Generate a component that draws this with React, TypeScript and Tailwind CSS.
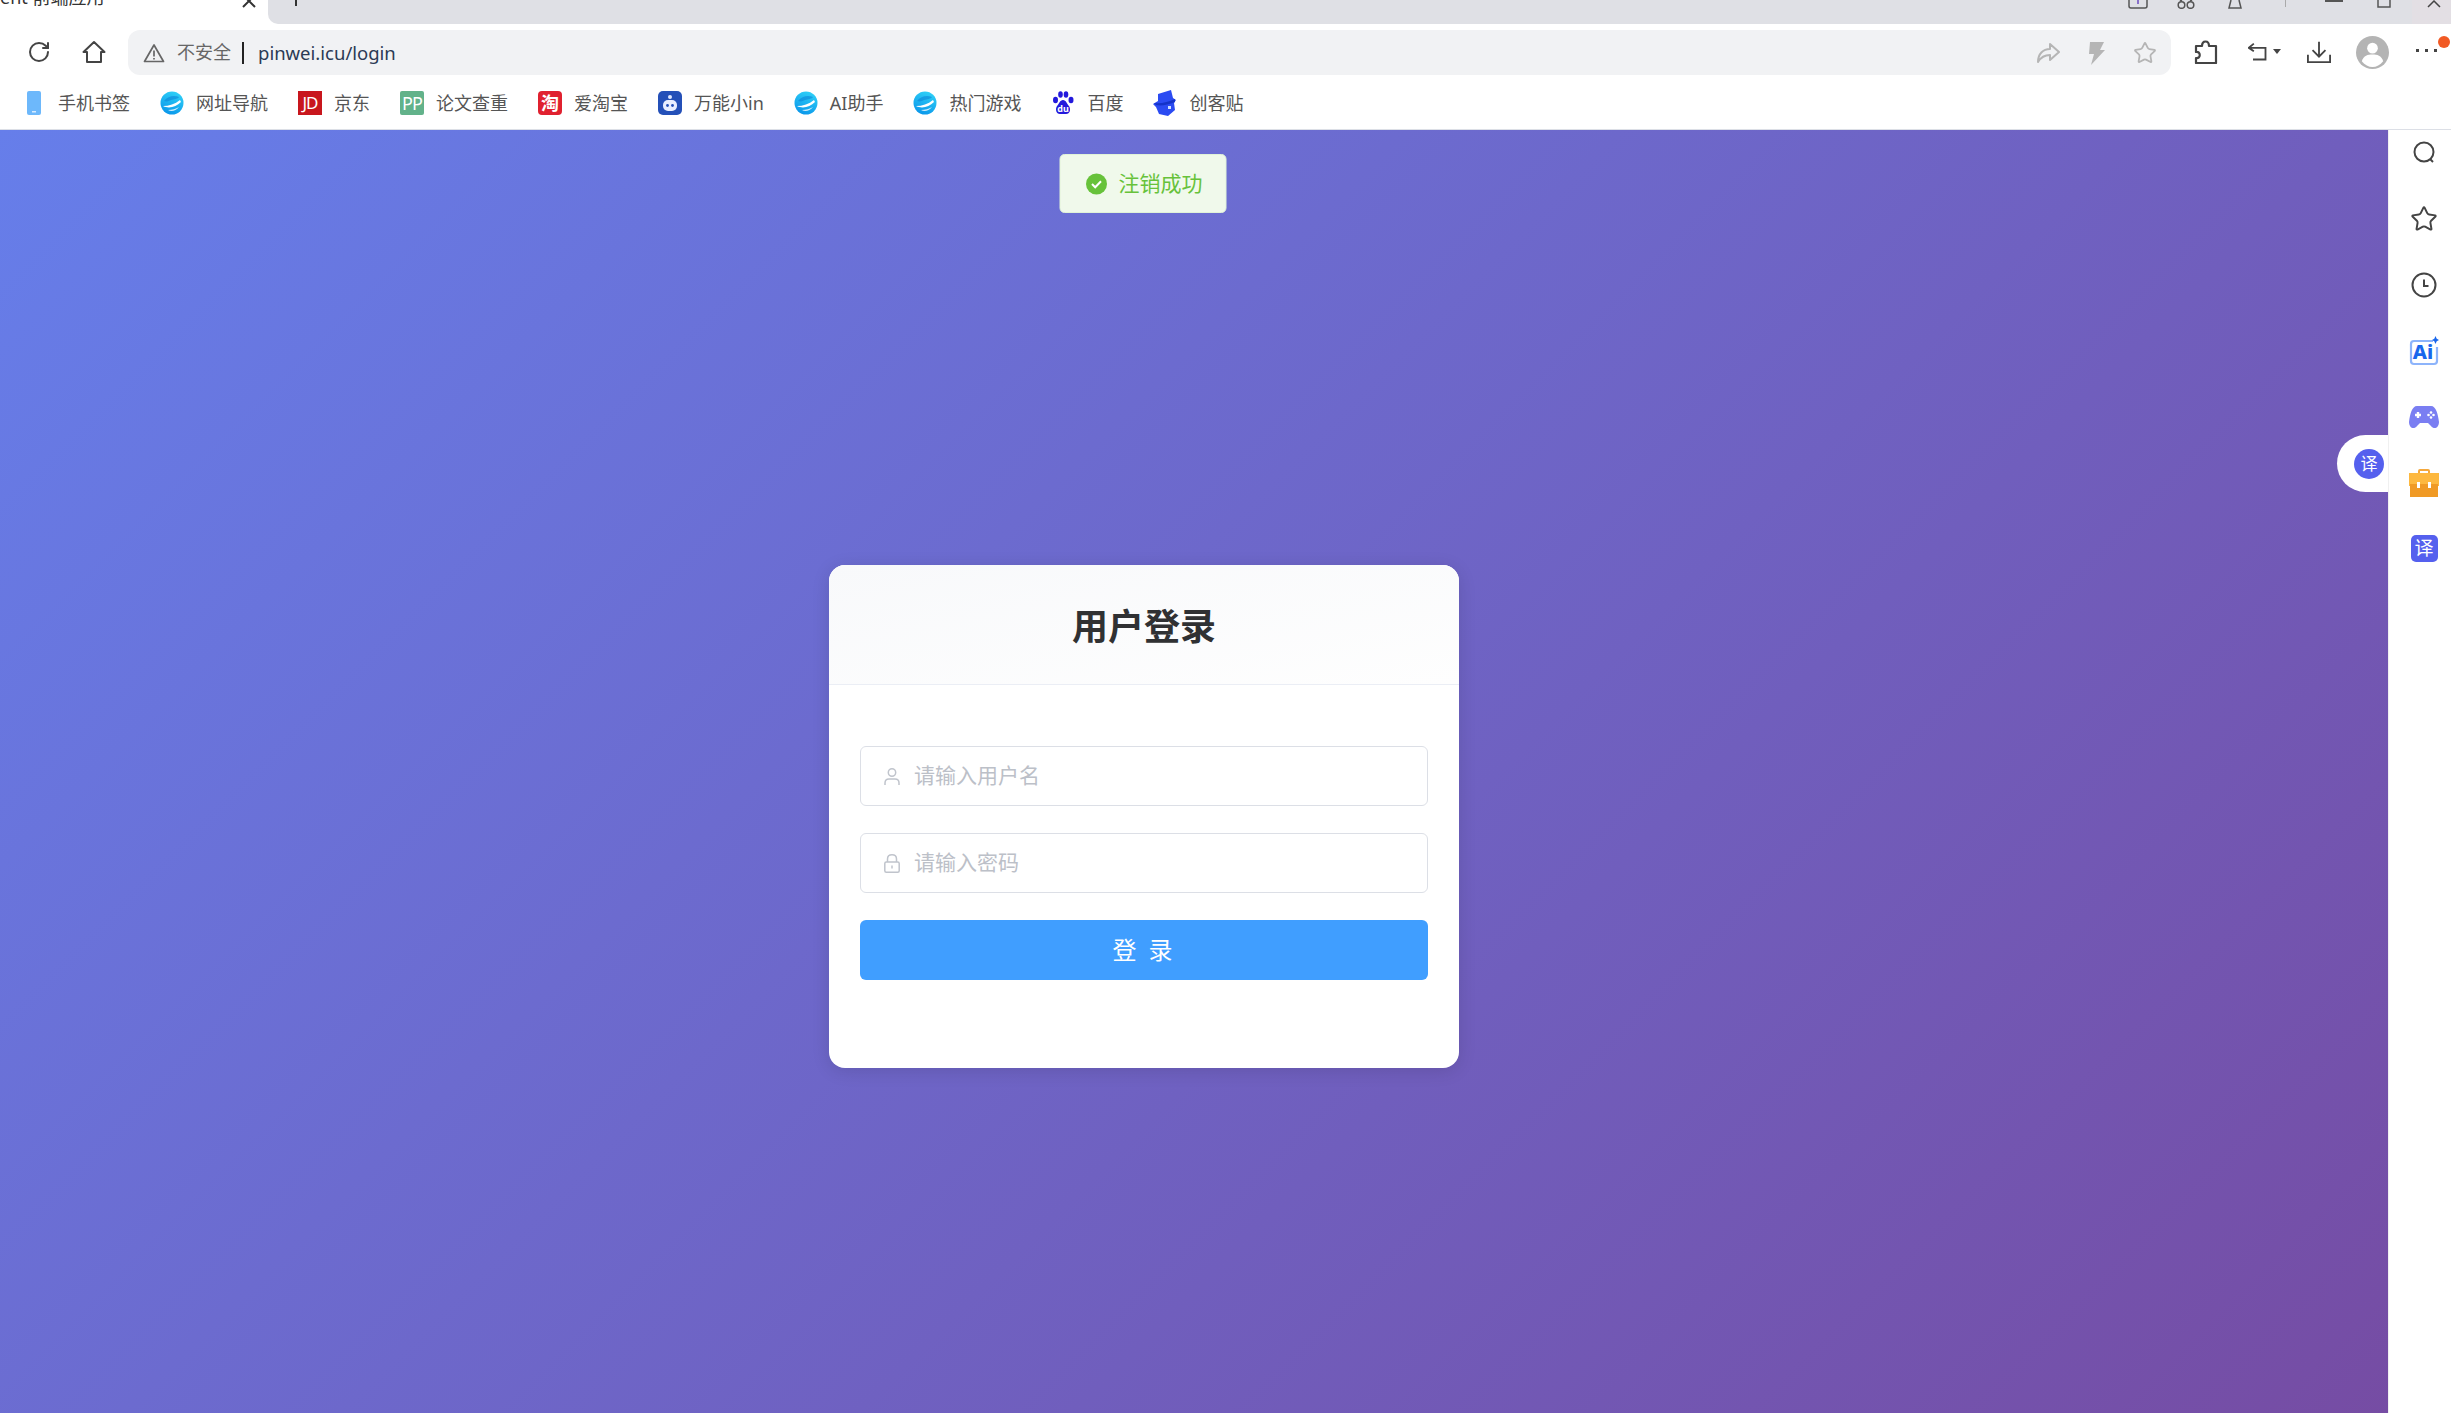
import { RotateCw, Star } from "lucide-react";

const bookmarks = [
  { name: "手机书签", icon: <PhoneMark /> },
  { name: "网址导航", icon: <EdgeMark id="e1" /> },
  {
    name: "京东",
    icon: (
      <span className="flex h-[24px] w-[24px] items-center justify-center bg-[#c8161d] text-[17px] tracking-[-1px] text-white">
        JD
      </span>
    ),
  },
  {
    name: "论文查重",
    icon: (
      <span className="flex h-[24px] w-[24px] items-center justify-center rounded-[2px] bg-[#62b28a] text-[18px] tracking-[-1px] text-white">
        PP
      </span>
    ),
  },
  {
    name: "爱淘宝",
    icon: (
      <span className="flex h-[24px] w-[24px] items-center justify-center rounded-[4px] bg-[#e0212f] text-[18px] font-bold leading-none text-white">
        淘
      </span>
    ),
  },
  { name: "万能小in", icon: <RobotMark /> },
  { name: "AI助手", icon: <EdgeMark id="e2" /> },
  { name: "热门游戏", icon: <EdgeMark id="e3" /> },
  { name: "百度", icon: <PawMark /> },
  { name: "创客贴", icon: <HatMark /> },
];

function PhoneMark() {
  return (
    <svg viewBox="0 0 24 24" className="h-[24px] w-[24px]">
      <rect x="5" y="0" width="14" height="24" rx="2" fill="#6db8fb" />
      <rect x="10" y="20" width="4" height="1.5" fill="#d8ecff" />
    </svg>
  );
}

function EdgeMark({ id }: { id: string }) {
  return (
    <svg viewBox="0 0 24 24" className="h-[24px] w-[24px]">
      <defs>
        <linearGradient id={id} x1="0.7" y1="0" x2="0.3" y2="1">
          <stop offset="0" stopColor="#2fd0f7" />
          <stop offset="1" stopColor="#0a96ea" />
        </linearGradient>
      </defs>
      <circle cx="12" cy="12" r="11.5" fill={`url(#${id})`} />
      <path d="M4 10C8 5 14 4 19 6c-1 2-5 2-8 3-2 1-4 2-7 1z" fill="#0b7fd6" opacity="0.55" />
      <path d="M3 15c6 0 12-2 17-6l1 2c-5 5-12 7-18 4z" fill="#fff" />
      <path d="M8 19c4 0 8-1 11-3-3 4-8 5-11 3z" fill="#fff" opacity="0.8" />
    </svg>
  );
}

function RobotMark() {
  return (
    <svg viewBox="0 0 24 24" className="h-[24px] w-[24px]">
      <rect width="24" height="24" rx="5" fill="#2450b8" />
      <circle cx="12" cy="6" r="2" fill="#dfe8ff" />
      <rect x="5" y="9" width="14" height="11" rx="5" fill="#e9efff" />
      <circle cx="9.5" cy="14.5" r="1.4" fill="#2450b8" />
      <circle cx="14.5" cy="14.5" r="1.4" fill="#2450b8" />
    </svg>
  );
}

function PawMark() {
  return (
    <svg viewBox="0 0 24 24" className="h-[24px] w-[24px]" fill="#2319dc">
      <ellipse cx="4.5" cy="9" rx="2.5" ry="3.2" />
      <ellipse cx="9.5" cy="3.5" rx="2.3" ry="3.2" />
      <ellipse cx="15" cy="3.5" rx="2.3" ry="3.2" />
      <ellipse cx="20" cy="9" rx="2.5" ry="3.2" />
      <path d="M12 9c-3 0-4 4-6 6-2 3-1 8 3 8h6c4 0 5-5 3-8-2-2-3-6-6-6z" />
      <text x="12" y="20.5" textAnchor="middle" fontSize="9" fontWeight="700" fill="#fff">
        du
      </text>
    </svg>
  );
}

function HatMark() {
  return (
    <svg viewBox="0 0 24 26" className="h-[26px] w-[24px]">
      <path d="M5 4l13-4 2 8 3 2-2 3 1 7-7 6-9-2-3-7-3-3 5-3z" fill="#2b4bf2" />
      <path d="M1 13c7 1 14-1 21-4v3C15 15 8 16 3 15z" fill="#1433c8" />
      <rect x="15" y="16" width="3" height="3" fill="#cfe0ff" />
    </svg>
  );
}

function TopStrip() {
  return (
    <div className="flex h-[24px] shrink-0 overflow-hidden bg-white">
      <div className="flex w-[268px] shrink-0 items-start justify-between overflow-hidden pr-[12px] text-[18px] leading-none text-[#333]">
        <span className="-mt-[12px]">ent 前端应用</span>
        <svg viewBox="0 0 14 8" className="h-[8px] w-[14px]" stroke="#333" strokeWidth="2" fill="none">
          <path d="M1-5l12 12M13-5L1 7" />
        </svg>
      </div>
      <div className="flex flex-1 items-start rounded-bl-[10px] bg-[#dfe0e5]">
        <span className="ml-[27px] h-[6px] w-[2px] bg-[#333]" />
        <div className="ml-auto flex items-start">
          <svg viewBox="0 0 20 9" className="h-[9px] w-[20px]" fill="none" stroke="#555" strokeWidth="1.5">
            <path d="M1-2v8q0 2 2 2h14q2 0 2-2v-8" />
            <path d="M10 0v4" stroke="#6b4bc0" />
          </svg>
          <svg viewBox="0 0 18 9" className="ml-[29px] h-[9px] w-[18px]" fill="none" stroke="#555" strokeWidth="1.5">
            <circle cx="4.5" cy="5" r="3.3" />
            <circle cx="13.5" cy="5" r="3.3" />
            <path d="M3 1l2-1M13 1l2-1" />
          </svg>
          <svg viewBox="0 0 14 9" className="ml-[33px] h-[9px] w-[14px]" fill="none" stroke="#555" strokeWidth="1.5">
            <path d="M3 0L1 8h12L11 0" />
          </svg>
          <span className="ml-[43px] h-[7px] w-[1px] bg-[#aaa]" />
          <span className="ml-[39px] h-[2px] w-[18px] bg-[#555]" />
          <svg viewBox="0 0 14 8" className="ml-[34px] h-[8px] w-[14px]" fill="none" stroke="#555" strokeWidth="1.5">
            <path d="M1-1v8h12v-8" />
          </svg>
          <div className="ml-[21px] h-[24px] w-[39px] bg-[#e3dfe4] pl-[15px]">
            <svg viewBox="0 0 14 8" className="h-[8px] w-[14px]" fill="none" stroke="#444" strokeWidth="1.5">
              <path d="M1 7l6-6 6 6" />
            </svg>
          </div>
        </div>
      </div>
    </div>
  );
}

function Toolbar() {
  return (
    <div className="flex h-[56px] shrink-0 items-start bg-white pr-[14px] pt-[6px]">
      <RotateCw size={24} strokeWidth={2} className="ml-[27px] mt-[10px] text-[#444]" />
      <svg viewBox="0 0 24 24" className="ml-[31px] mt-[10px] h-[24px] w-[24px]" fill="none" stroke="#444" strokeWidth="2">
        <path d="M1.500 12L12 2l10.500 10H19v10H5V12z" strokeLinejoin="round" />
      </svg>
      <div className="ml-[22px] flex h-[45px] flex-1 items-center rounded-[12px] bg-[#f1f2f4] pl-[15px] pr-[14px]">
        <svg viewBox="0 0 22 20" className="h-[20px] w-[22px]" fill="none" stroke="#666" strokeWidth="1.7">
          <path d="M11 2L1.500 18.500h19z" strokeLinejoin="round" />
          <path d="M11 7.500v6M11 15v1.600" />
        </svg>
        <span className="ml-[12px] text-[18px] text-[#666]">不安全</span>
        <span className="ml-[11px] h-[22px] w-[2px] bg-[#222]" />
        <span className="ml-[14px] text-[18.5px] text-[#2b3a55]">pinwei.icu/login</span>
        <svg viewBox="0 0 24 24" className="ml-auto h-[24px] w-[24px]" fill="none" stroke="#b5b5b5" strokeWidth="2">
          <path d="M14 3l9 8-9 8v-5c-5 0-9 2-12 7 0-8 5-13 12-13z" strokeLinejoin="round" />
        </svg>
        <svg viewBox="0 0 18 24" className="ml-[27px] h-[24px] w-[18px]" fill="#b5b5b5">
          <path d="M3 1h14l-4 8h5L4 24l3-11H2z" />
        </svg>
        <Star size={24} strokeWidth={1.8} className="ml-[28px] text-[#b5b5b5]" />
      </div>
      <svg viewBox="0 0 24 24" className="ml-[23px] mt-[10px] h-[24px] w-[24px]" fill="none" stroke="#444" strokeWidth="2.2">
        <path d="M2 6h6c0-6 7-6 7 0h7v17H2v-5c5 1 5-7 0-6z" strokeLinejoin="round" />
      </svg>
      <svg viewBox="0 0 24 22" className="ml-[30px] mt-[12px] h-[20px] w-[20px]" fill="none" stroke="#444" strokeWidth="2.2">
        <path d="M7 1L1 6l6 4M1 6h20v14H6" />
      </svg>
      <span className="ml-[5px] mt-[19px] h-0 w-0 border-x-[4px] border-t-[5px] border-x-transparent border-t-[#444]" />
      <svg viewBox="0 0 26 24" className="ml-[26px] mt-[10px] h-[24px] w-[24px]" fill="none" stroke="#444" strokeWidth="2">
        <path d="M13 1v15M6 10l7 7 7-7M1 15v8h24v-8" />
      </svg>
      <svg viewBox="0 0 34 34" className="ml-[25px] mt-[6px] h-[33px] w-[33px]">
        <circle cx="17" cy="17" r="17" fill="#b4b4b4" />
        <circle cx="17" cy="12.500" r="5.500" fill="#fff" />
        <path d="M6 26c2-6 6-7 11-7s9 1 11 7c-3 4-7 6-11 6s-8-2-11-6z" fill="#fff" />
      </svg>
      <div className="relative ml-[27px] mt-[19px] flex gap-[6px]">
        <span className="h-[3px] w-[3px] bg-[#444]" />
        <span className="h-[3px] w-[3px] bg-[#444]" />
        <span className="h-[3px] w-[3px] bg-[#444]" />
        <span className="absolute -top-[13px] left-[22px] h-[12px] w-[12px] rounded-full bg-[#f15a24]" />
      </div>
    </div>
  );
}

function Bookmarks() {
  return (
    <div className="flex h-[50px] shrink-0 items-center gap-[30px] border-b border-[#dcdfe6] bg-white pb-[3px] pl-[22px]">
      {bookmarks.map((b) => (
        <div key={b.name} className="flex items-center gap-[12px] text-[18px] text-[#555]">
          <span className="flex h-[26px] w-[24px] items-center justify-center">{b.icon}</span>
          <span>{b.name}</span>
        </div>
      ))}
    </div>
  );
}

function LoginCard() {
  return (
    <div className="w-[630px] overflow-hidden rounded-[16px] bg-white shadow-[0_3px_18px_rgba(0,0,0,0.12)]">
      <div className="flex h-[120px] items-center justify-center border-b-[1.5px] border-[#ebeef5] bg-gradient-to-br from-[#f8f9fb] to-[#fefefe] pt-[5px]">
        <h2 className="text-[36px] font-bold text-[#303133]">用户登录</h2>
      </div>
      <div className="flex flex-col gap-[27px] px-[31px] pb-[88px] pt-[61px]">
        <label className="flex h-[60px] items-center rounded-[6px] border-[1.5px] border-[#dcdfe6] pl-[23px] pr-[20px]">
          <svg viewBox="0 0 16 17" className="h-[17px] w-[16px] shrink-0" fill="none" stroke="#c0c4cc" strokeWidth="1.5">
            <circle cx="8" cy="4.500" r="3.700" />
            <path d="M1 17v-2q0-4 4-4h6q4 0 4 4v2" />
          </svg>
          <input
            placeholder="请输入用户名"
            className="ml-[14px] w-full text-[21px] outline-none placeholder:text-[#bcc0c8]"
          />
        </label>
        <label className="flex h-[60px] items-center rounded-[6px] border-[1.5px] border-[#dcdfe6] pl-[23px] pr-[20px]">
          <svg viewBox="0 0 16 19" className="h-[19px] w-[16px] shrink-0" fill="none" stroke="#c0c4cc" strokeWidth="1.5">
            <path d="M3.500 8V5q0-4.200 4.500-4.200T12.500 5v3" />
            <rect x="0.800" y="8" width="14.400" height="10.200" rx="1.500" />
            <path d="M8 11.500v3" />
          </svg>
          <input
            type="text"
            placeholder="请输入密码"
            className="ml-[14px] w-full text-[21px] outline-none placeholder:text-[#bcc0c8]"
          />
        </label>
        <button className="h-[60px] rounded-[6px] bg-[#409eff] text-[24px] tracking-[3px] text-white">登 录</button>
      </div>
    </div>
  );
}

function SideIcons() {
  return (
    <div className="flex w-[63px] shrink-0 flex-col items-center gap-[32px] border-l border-[#f0f0f0] bg-white pl-[8px] pt-[6px]">
      <svg viewBox="0 0 24 24" className="h-[34px] w-[24px]" fill="none" stroke="#444" strokeWidth="2">
        <circle cx="12" cy="11" r="9.500" />
        <path d="M18 18l3 3" />
      </svg>
      <Star size={28} strokeWidth={1.7} className="h-[34px] text-[#444]" />
      <svg viewBox="0 0 26 26" className="h-[34px] w-[26px]" fill="none" stroke="#444" strokeWidth="2">
        <circle cx="13" cy="13" r="11.500" />
        <path d="M13 7.500V14h4.500" />
      </svg>
      <svg viewBox="0 0 30 30" className="h-[34px] w-[30px]">
        <path d="M24 5H5Q2 5 2 8v17q0 3 3 3h20q3 0 3-3V11" fill="none" stroke="#8db4fb" strokeWidth="2.200" />
        <text x="14" y="23" textAnchor="middle" fontSize="20" fontWeight="800" fill="#1967ec">
          Ai
        </text>
        <path d="M26.500 0l1.200 2.800L30 4l-2.300 1.200L26.500 8l-1.200-2.800L23 4l2.300-1.200z" fill="#1967ec" />
      </svg>
      <svg viewBox="0 0 30 24" className="h-[34px] w-[30px]">
        <path d="M8 1h14c5 0 7 8 8 16 0 6-5 8-8 4l-3-3h-8l-3 3c-3 4-8 2-8-4C1 9 3 1 8 1z" fill="#7a7ef2" />
        <path d="M6 10h6M9 7v6" stroke="#fff" strokeWidth="2.400" />
        <circle cx="22" cy="7.500" r="1.300" fill="#fff" />
        <circle cx="22" cy="12.500" r="1.300" fill="#fff" />
        <circle cx="19.500" cy="10" r="1.300" fill="#fff" />
        <circle cx="24.500" cy="10" r="1.300" fill="#fff" />
      </svg>
      <svg viewBox="0 0 30 30" className="h-[34px] w-[30px]">
        <path d="M10 6V3q0-1 1-1h8q1 0 1 1v3" fill="none" stroke="#f5a83c" strokeWidth="2" />
        <rect x="0" y="5" width="30" height="13" fill="#fdb83f" />
        <rect x="1" y="16" width="28" height="13" fill="#f09a25" />
        <rect x="8" y="14" width="3" height="6" fill="#fff" />
        <rect x="19" y="14" width="3" height="6" fill="#fff" />
      </svg>
      <span className="mt-[3px] flex h-[27px] w-[27px] items-center justify-center rounded-[5px] bg-[#5560ee] text-[19px] leading-none text-white">
        译
      </span>
    </div>
  );
}

export default function App() {
  return (
    <div className="flex h-screen flex-col overflow-hidden bg-white font-['Noto_Sans','Noto_Sans_CJK_SC',sans-serif]">
      <TopStrip />
      <Toolbar />
      <Bookmarks />
      <div className="flex min-h-0 flex-1">
        <main className="relative min-w-0 flex-1 overflow-hidden">
          <div className="flex h-[1373px] items-center justify-center bg-[linear-gradient(135deg,#667eea_0%,#764ba2_100%)] pr-[100px]">
            <LoginCard />
          </div>
          <div className="absolute left-[1143px] top-[24px] flex h-[59px] w-[167px] -translate-x-1/2 items-center gap-[11px] rounded-[5px] border border-[#e1f3d8] bg-[#f0f9eb] pl-[25px] text-[21px] text-[#67c23a]">
            <svg viewBox="0 0 22 22" className="h-[22px] w-[22px] shrink-0">
              <circle cx="11" cy="11" r="10.500" fill="#67c23a" />
              <path d="M6.500 11l3.200 3.200 5.800-6" fill="none" stroke="#fff" strokeWidth="2" />
            </svg>
            <span className="whitespace-nowrap">注销成功</span>
          </div>
          <div className="absolute right-0 top-[305px] flex h-[57px] w-[51px] items-center rounded-l-full bg-white pl-[17px]">
            <span className="flex h-[30px] w-[30px] items-center justify-center rounded-full bg-[#5560ee] text-[17px] leading-none text-white">
              译
            </span>
          </div>
        </main>
        <SideIcons />
      </div>
    </div>
  );
}
